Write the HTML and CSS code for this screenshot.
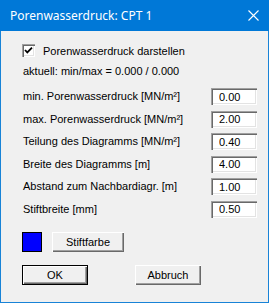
FILE: index.html
```html
<!DOCTYPE html>
<html lang="de">
<head>
    <meta charset="UTF-8">
    <meta name="viewport" content="width=device-width, initial-scale=1.0">
    <title>Porenwasserdruck: CPT 1</title>
    <link rel="stylesheet" href="styles.css">
</head>
<body>
    <div class="window">
        <div class="titlebar">
            <span class="title">Porenwasserdruck: CPT 1</span>
            <svg class="close" width="11" height="11" viewBox="0 0 11 11">
                <path d="M0.5 0.5 L10.5 10.5 M10.5 0.5 L0.5 10.5" stroke="#fff" stroke-width="1.1" fill="none"/>
            </svg>
        </div>
        <div class="dialog">
            <label class="check-row">
                <span class="checkbox">
                    <svg width="9" height="9" viewBox="0 0 9 9">
                        <polyline points="1,4 3.3,6.4 8,1.6" stroke="#000" stroke-width="1.8" fill="none"/>
                    </svg>
                </span>
                Porenwasserdruck darstellen
            </label>
            <div class="info">aktuell: min/max = 0.000 / 0.000</div>

            <div class="fields">
                <label class="field-label">min. Porenwasserdruck [MN/m²]</label>
                <input class="field" type="text" value="0.00">
                <label class="field-label">max. Porenwasserdruck [MN/m²]</label>
                <input class="field" type="text" value="2.00">
                <label class="field-label">Teilung des Diagramms [MN/m²]</label>
                <input class="field" type="text" value="0.40">
                <label class="field-label">Breite des Diagramms [m]</label>
                <input class="field" type="text" value="4.00">
                <label class="field-label">Abstand zum Nachbardiagr. [m]</label>
                <input class="field" type="text" value="1.00">
                <label class="field-label">Stiftbreite [mm]</label>
                <input class="field" type="text" value="0.50">
            </div>

            <div class="color-row">
                <span class="swatch"></span>
                <button class="btn btn-color" type="button">Stiftfarbe</button>
            </div>

            <div class="actions">
                <button class="btn btn-default" type="button">OK</button>
                <button class="btn" type="button">Abbruch</button>
            </div>
        </div>
    </div>
</body>
</html>
```

FILE: styles.css
```css
body {
    margin: 0;
    background: #f0f0f0;
    font-family: "Liberation Sans", Arial, sans-serif;
    font-size: 11px;
    color: #000;
}
.window {
    width: 269px;
    height: 303px;
    box-sizing: border-box;
    border: 1px solid #1883d7;
    border-top: none;
    background: #f0f0f0;
}
.titlebar {
    height: 31px;
    margin: 0 -1px;
    background: #0078d7;
    display: flex;
    align-items: center;
    justify-content: space-between;
    padding: 0 10px 0 10px;
    color: #fff;
}
.title {
    font-family: "Noto Sans", sans-serif;
    font-size: 12px;
    padding-bottom: 1px;
}
.close {
    display: block;
    margin-right: 0;
}
.dialog {
    padding: 13px 11px 0 21px;
}
.check-row {
    display: flex;
    align-items: center;
    gap: 8px;
    height: 13px;
}
.checkbox {
    width: 13px;
    height: 13px;
    box-sizing: border-box;
    background: #fff;
    box-shadow: inset 1px 1px #a0a0a0, inset 2px 2px #696969, inset -1px -1px #fff, inset -2px -2px #e3e3e3;
    display: flex;
    align-items: center;
    justify-content: center;
}
.checkbox svg {
    display: block;
}
.info {
    margin-top: 8px;
    line-height: 13px;
    padding-left: 1px;
}
.fields {
    margin-top: 10px;
    display: grid;
    grid-template-columns: 1fr 46px;
    grid-auto-rows: 17px;
    row-gap: 5.6px;
    align-items: center;
}
.field-label {
    padding-left: 1px;
    line-height: 13px;
}
.field {
    width: 46px;
    height: 17px;
    box-sizing: border-box;
    border: none;
    margin: 0;
    padding: 0 0 0 8px;
    background: #fff;
    font-family: "Liberation Sans", Arial, sans-serif;
    font-size: 11px;
    color: #000;
    box-shadow: inset 1px 1px #a0a0a0, inset 2px 2px #696969, inset -1px -1px #fff, inset -2px -2px #e3e3e3;
    outline: none;
}
.color-row {
    margin-top: 14px;
    display: flex;
    gap: 10px;
    height: 20px;
}
.swatch {
    width: 20px;
    height: 20px;
    box-sizing: border-box;
    background: #0000ff;
    border: 1px solid #000;
}
.btn {
    height: 20px;
    border: none;
    margin: 0;
    padding: 0;
    background: #f0f0f0;
    font-family: "Liberation Sans", Arial, sans-serif;
    font-size: 11px;
    color: #000;
    box-shadow: inset 1px 1px #fff, inset -1px -1px #696969, inset -2px -2px #a0a0a0;
}
.btn-color {
    width: 72px;
}
.actions {
    margin-top: 13px;
    display: flex;
    gap: 47px;
}
.actions .btn {
    width: 66px;
}
.btn-default {
    border: 1px solid #000;
    box-shadow: inset 1px 1px #fff, inset -1px -1px #696969, inset -2px -2px #a0a0a0;
}
```
